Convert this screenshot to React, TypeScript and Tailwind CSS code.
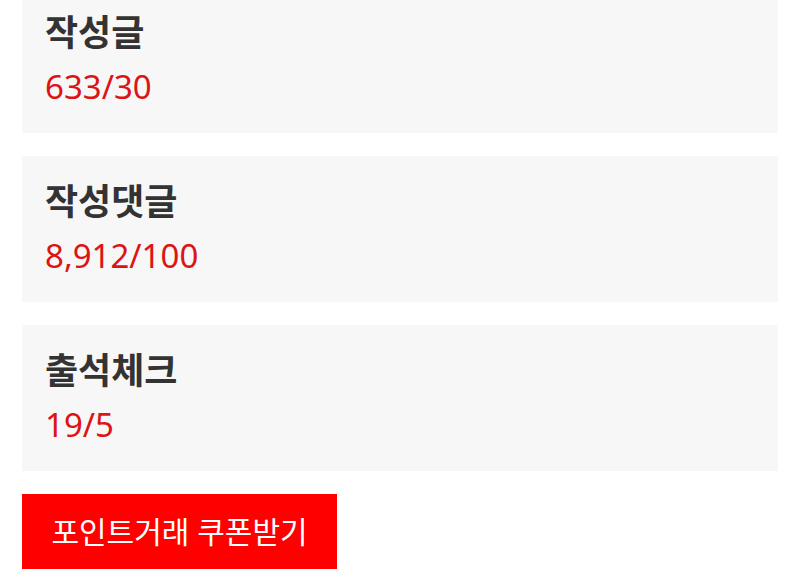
const stats = [
  { label: '작성글', value: '633/30' },
  { label: '작성댓글', value: '8,912/100' },
  { label: '출석체크', value: '19/5' },
];

export default function App() {
  return (
    <div
      className="min-h-screen bg-white overflow-hidden"
      style={{ fontFamily: '"Noto Sans", "Noto Sans CJK KR", sans-serif' }}
    >
      <div className="-mt-[13px] px-[22px] flex flex-col gap-[23px]">
        {stats.map((s) => (
          <div key={s.label} className="bg-[#f7f7f7] pl-[23px] pt-[20px] pb-[18px]">
            <div className="text-[36px] leading-[52px] font-bold text-[#333333]">{s.label}</div>
            <div className="text-[33px] leading-[56px] text-[#dc1414]">{s.value}</div>
          </div>
        ))}
        <button className="w-[315px] h-[75px] bg-[#ff0000] text-white text-[30px] flex items-center justify-center">
          포인트거래 쿠폰받기
        </button>
      </div>
    </div>
  );
}
